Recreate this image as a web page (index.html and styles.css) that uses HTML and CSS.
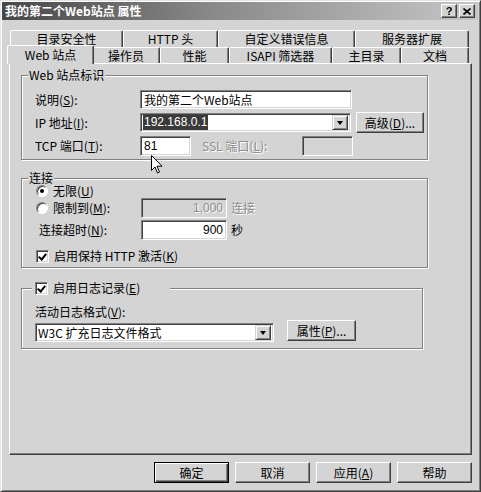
FILE: index.html
```html
<!DOCTYPE html>
<html lang="zh-CN">

<head>
    <meta charset="UTF-8">
    <title>我的第二个Web站点 属性</title>
    <link rel="stylesheet" href="styles.css">
</head>

<body>
    <div class="window">
        <div class="titlebar">
            <span class="title">我的第二个Web站点 属性</span>
            <span class="cap-btn help">?</span>
            <span class="cap-btn close">
                <svg width="8" height="7" viewBox="0 0 8 7">
                    <path d="M0.5 0.5l7 6M7.5 0.5l-7 6" stroke="#000" stroke-width="1.6" fill="none"/>
                </svg>
            </span>
        </div>

        <div class="content">
            <div class="tabs">
                <div class="tab-row back">
                    <div class="tab">目录安全性</div>
                    <div class="tab">HTTP 头</div>
                    <div class="tab">自定义错误信息</div>
                    <div class="tab">服务器扩展</div>
                </div>
                <div class="tab-row front">
                    <div class="tab active">Web 站点</div>
                    <div class="tab">操作员</div>
                    <div class="tab">性能</div>
                    <div class="tab">ISAPI 筛选器</div>
                    <div class="tab">主目录</div>
                    <div class="tab">文档</div>
                </div>
            </div>

            <div class="panel">
                <!-- site identity -->
                <div class="group ident">
                    <span class="legend">Web 站点标识</span>
                    <div class="row">
                        <span class="lbl">说明(<u>S</u>):</span>
                        <div class="field desc">我的第二个Web站点</div>
                    </div>
                    <div class="row">
                        <span class="lbl">IP 地址(<u>I</u>):</span>
                        <div class="field combo ip">
                            <span class="selected num">192.168.0.1</span>
                            <span class="drop"><span class="arrow"></span></span>
                        </div>
                        <div class="btn adv">高级(<u>D</u>)...</div>
                    </div>
                    <div class="row">
                        <span class="lbl">TCP 端口(<u>T</u>):</span>
                        <div class="field port num">81</div>
                        <span class="ssl disabled">SSL 端口(<u>L</u>):</span>
                        <div class="field port off"></div>
                    </div>
                </div>

                <!-- connections -->
                <div class="group conn">
                    <span class="legend">连接</span>
                    <div class="row r-unlimited">
                        <span class="radio on"></span>
                        <span>无限(<u>U</u>)</span>
                    </div>
                    <div class="row r-limit">
                        <span class="lbl wide with-radio"><span class="radio"></span><span>限制到(<u>M</u>):</span></span>
                        <div class="field count off num disabled">1,000</div>
                        <span class="unit disabled">连接</span>
                    </div>
                    <div class="row r-timeout">
                        <span class="lbl wide indent">连接超时(<u>N</u>):</span>
                        <div class="field count num">900</div>
                        <span class="unit">秒</span>
                    </div>
                    <div class="row r-keep">
                        <span class="check on"></span>
                        <span>启用保持 HTTP 激活(<u>K</u>)</span>
                    </div>
                </div>

                <!-- logging -->
                <div class="group logging">
                    <span class="legend log-legend"><span class="check on"></span><span>启用日志记录(<u>E</u>)</span></span>
                    <div class="row r-format">活动日志格式(<u>V</u>):</div>
                    <div class="row r-select">
                        <div class="field combo logfmt">
                            <span>W3C 扩充日志文件格式</span>
                            <span class="drop"><span class="arrow"></span></span>
                        </div>
                        <div class="btn props">属性(<u>P</u>)...</div>
                    </div>
                </div>
            </div>

            <div class="buttons">
                <div class="btn dlg default">确定</div>
                <div class="btn dlg">取消</div>
                <div class="btn dlg">应用(<u>A</u>)</div>
                <div class="btn dlg">帮助</div>
            </div>
        </div>

        <svg class="cursor" width="12" height="19" viewBox="0 0 12 19">
            <path d="M0.5 0.5v15l3.5-3.5 2.5 6 2-1-2.5-5.8h5z" fill="#fff" stroke="#000"/>
        </svg>
    </div>
</body>

</html>
```

FILE: styles.css
```css
* {
    box-sizing: border-box;
}

body {
    margin: 0;
    background: #d4d4d4;
    font-family: "Noto Sans CJK SC", sans-serif;
    font-size: 12px;
    line-height: 14px;
    color: #000;
}

u {
    text-decoration-thickness: 1px;
    text-underline-offset: 1px;
}

.window {
    position: relative;
    width: 481px;
    height: 492px;
    background: #d4d4d4;
    border: 1px solid;
    border-color: #e4e4e4 #404040 #404040 #e4e4e4;
    box-shadow: inset 1px 1px 0 #fff, inset -1px -1px 0 #808080;
    padding: 1px 2px 0 1px;
}

.titlebar {
    display: flex;
    align-items: center;
    height: 18px;
    padding: 0 3px 0 3px;
    background: linear-gradient(to right, #474747, #8a8a8a 45%, #c6c6c6);
}

.title {
    flex: 1;
    color: #fff;
    font-weight: bold;
    font-size: 12px;
}

.cap-btn {
    display: flex;
    align-items: center;
    justify-content: center;
    width: 16px;
    height: 14px;
    background: #d4d4d4;
    border: 1px solid;
    border-color: #fff #404040 #404040 #fff;
    box-shadow: inset -1px -1px 0 #808080;
    font-family: "Liberation Sans", sans-serif;
    font-weight: bold;
    font-size: 11px;
    line-height: 1;
}

.help {
    margin-right: 2px;
}

.content {
    padding: 10px 6px 0 7px;
}

/* tabs */
.tab-row {
    display: grid;
}

.back {
    grid-template-columns: 113px 95px 137px 114px;
    margin-left: 1px;
    height: 17px;
}

.front {
    grid-template-columns: 83px 68px 69px 103px 69px 68px;
    height: 16px;
}

.tab {
    border: 1px solid;
    border-bottom: none;
    border-color: #fff #404040 transparent #fff;
    border-radius: 2px 2px 0 0;
    box-shadow: inset -1px 0 0 #808080;
    background: #d4d4d4;
    text-align: center;
    line-height: 15px;
    white-space: nowrap;
}

.back .tab {
    line-height: 14px;
    padding-top: 1px;
}

.tab.active {
    position: relative;
    z-index: 1;
    margin: -2px -2px -1px -2px;
    padding-top: 2px;
    line-height: 14px;
}

/* page panel */
.panel {
    height: 392px;
    padding: 11px 0 0 11px;
    border: 1px solid;
    border-color: #fff #404040 #404040 #fff;
    box-shadow: inset -1px -1px 0 #808080;
}

.group {
    position: relative;
    border: 1px solid #808080;
    box-shadow: inset 1px 1px 0 #fff, 1px 1px 0 #fff;
    padding-left: 13px;
}

.legend {
    position: absolute;
    top: -8px;
    left: 6px;
    height: 14px;
    padding: 0 1px;
    background: #d4d4d4;
    display: flex;
    align-items: center;
    gap: 5px;
}

.row {
    display: flex;
    align-items: center;
    white-space: nowrap;
}

.lbl {
    width: 105px;
    flex: none;
}

.lbl.wide {
    width: 106px;
}

.lbl.with-radio {
    display: flex;
    align-items: center;
    gap: 5px;
}

.lbl.indent {
    padding-left: 4px;
}

/* inputs */
.field {
    height: 19px;
    padding: 0 3px;
    display: flex;
    align-items: center;
    background: #fff;
    border: 1px solid;
    border-color: #808080 #fff #fff #808080;
    box-shadow: inset 1px 1px 0 #404040, inset -1px -1px 0 #d4d4d4;
}

.field.off {
    background: #d4d4d4;
}

.num {
    font-family: "Liberation Sans", sans-serif;
}

.combo {
    padding: 0 2px 0 2px;
    justify-content: space-between;
}

.drop {
    width: 16px;
    height: 15px;
    display: flex;
    align-items: center;
    justify-content: center;
    background: #d4d4d4;
    border: 1px solid;
    border-color: #d4d4d4 #404040 #404040 #d4d4d4;
    box-shadow: inset 1px 1px 0 #fff, inset -1px -1px 0 #808080;
}

.arrow {
    width: 0;
    height: 0;
    border-left: 3.5px solid transparent;
    border-right: 3.5px solid transparent;
    border-top: 4px solid #000;
}

.selected {
    background: #3a3a3a;
    color: #fff;
    padding: 0 1px;
    line-height: 15px;
}

.disabled {
    color: #8c8c8c;
    text-shadow: 1px 1px 0 #fff;
}

/* buttons */
.btn {
    height: 21px;
    display: flex;
    align-items: center;
    justify-content: center;
    background: #d4d4d4;
    border: 1px solid;
    border-color: #fff #404040 #404040 #fff;
    box-shadow: inset -1px -1px 0 #808080;
    white-space: nowrap;
}

.btn.default {
    border-color: #000;
    box-shadow: inset 1px 1px 0 #fff, inset -1px -1px 0 #404040, inset -2px -2px 0 #808080;
}

/* identity group */
.ident {
    width: 407px;
    height: 85px;
    padding-top: 12px;
}

.ident .row {
    height: 23px;
}

.desc {
    width: 212px;
}

.ip {
    width: 211px;
}

.adv {
    width: 68px;
    margin-left: 5px;
}

.port {
    width: 51px;
    height: 20px;
}

.ssl {
    width: 100px;
    margin-left: 11px;
}

/* connection group */
.conn {
    width: 407px;
    height: 90px;
    margin-top: 18px;
    padding-top: 5px;
}

.r-unlimited {
    height: 14px;
    gap: 5px;
    padding-left: 1px;
}

.r-limit {
    height: 20px;
}

.r-limit .lbl {
    padding-left: 1px;
}

.r-timeout {
    height: 20px;
    margin-top: 2px;
}

.r-keep {
    height: 16px;
    margin-top: 8px;
    gap: 5px;
    padding-left: 1px;
}

.count {
    width: 86px;
    height: 20px;
    justify-content: flex-end;
}

.unit {
    margin-left: 4px;
}

.radio {
    flex: none;
    width: 12px;
    height: 12px;
    border-radius: 50%;
    background: #fff;
    border: 1px solid;
    border-color: #808080 #fff #fff #808080;
    box-shadow: inset 1px 1px 0 #404040;
    display: flex;
    align-items: center;
    justify-content: center;
}

.radio.on::after {
    content: "";
    width: 4px;
    height: 4px;
    border-radius: 50%;
    background: #000;
}

.check {
    flex: none;
    width: 13px;
    height: 13px;
    background: #fff;
    border: 1px solid;
    border-color: #808080 #fff #fff #808080;
    box-shadow: inset 1px 1px 0 #404040, inset -1px -1px 0 #d4d4d4;
    position: relative;
}

.check.on::after {
    content: "";
    position: absolute;
    left: 3px;
    top: 1px;
    width: 3px;
    height: 6px;
    border: solid #000;
    border-width: 0 2px 2px 0;
    transform: rotate(40deg);
}

/* logging group */
.logging {
    width: 402px;
    height: 61px;
    margin-top: 20px;
    padding-top: 16px;
}

.log-legend {
    left: 10px;
    width: 138px;
    padding-left: 3px;
}

.r-format {
    height: 14px;
}

.r-select {
    margin-top: 1px;
    align-items: flex-start;
}

.logfmt {
    width: 239px;
    margin-top: 3px;
}

.props {
    width: 69px;
    margin-left: 13px;
}

/* dialog buttons */
.buttons {
    display: flex;
    justify-content: flex-end;
    gap: 6px;
    margin-top: 7px;
}

.dlg {
    width: 75px;
}

.cursor {
    position: absolute;
    left: 150px;
    top: 154px;
}
```
